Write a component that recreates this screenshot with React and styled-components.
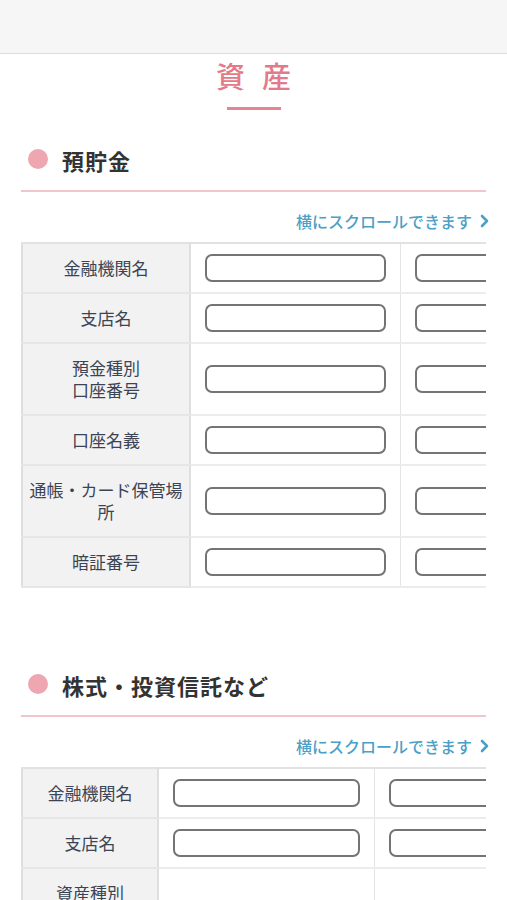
import React from "react";
import styled, { createGlobalStyle } from "styled-components";

const Global = createGlobalStyle`
  html, body { margin: 0; padding: 0; background: #fff; }
  body { font-family: "Noto Sans CJK JP", "Noto Sans", sans-serif; color: #333; }
  * { box-sizing: border-box; }
`;

const TopBar = styled.header`
  height: 54px;
  background: #f6f6f6;
  border-bottom: 1px solid #dcdcdc;
`;

const Main = styled.main`
  padding: 0 21px 40px;
`;

const PageTitle = styled.h1`
  margin: 3px 0 0;
  text-align: center;
  font-size: 29px;
  font-weight: 500;
  line-height: 36px;
  letter-spacing: 17px;
  padding-left: 17px;
  color: #e27a89;
  &::after {
    content: "";
    display: block;
    width: 54px;
    height: 3px;
    margin: 14px auto 0;
    background: #e48593;
    position: relative;
    left: -8px;
  }
`;

const Section = styled.section`
  margin-top: ${(p) => p.$top}px;
`;

const Heading = styled.h2`
  display: flex;
  align-items: center;
  gap: 14px;
  margin: 0;
  padding: 0 0 15px 7px;
  border-bottom: 2px solid #f1c5cc;
  font-size: 22px;
  font-weight: 700;
  line-height: 30px;
  color: #333;
  letter-spacing: 1px;
  &::before {
    content: "";
    width: 20px;
    height: 20px;
    border-radius: 50%;
    background: #eea6b0;
    flex: none;
    margin-top: -3px;
  }
`;

const ScrollHint = styled.p`
  margin: 17px -3px 9px 0;
  display: flex;
  justify-content: flex-end;
  align-items: center;
  gap: 8px;
  font-size: 16px;
  line-height: 24px;
  font-weight: 500;
  color: #4c9fc6;
`;

const TableScroller = styled.div`
  width: 100%;
  overflow: hidden;
`;

const Table = styled.table`
  border-collapse: collapse;
  table-layout: fixed;
  width: ${(p) => p.$width}px;
  border-top: 2px solid #e2e2e2;
  border-left: 2px solid #dedede;
`;

const LabelCell = styled.th`
  background: #f2f2f2;
  border-right: 2px solid #dedede;
  border-bottom: 2px solid #e6e6e6;
  padding: 13px 2px;
  font-size: 17px;
  font-weight: 400;
  line-height: 22px;
  color: #3b4454;
  text-align: center;
  white-space: pre-line;
`;

const InputCell = styled.td`
  border-right: 1px solid #e4e4e4;
  border-bottom: 2px solid #ececec;
  padding: 0 ${(p) => p.$pad}px;
  vertical-align: middle;
`;

const TextInput = styled.input`
  display: block;
  width: 100%;
  height: 28px;
  border: 2px solid #747474;
  border-radius: 7px;
  background: #fff;
  outline: none;
  padding: 0 6px;
  font: inherit;
`;

const Chevron = () => (
  <svg width="9" height="14" viewBox="0 0 9 14" aria-hidden="true">
    <polyline points="2,2 7,7 2,12" fill="none" stroke="#4c9fc6" strokeWidth="2.6" strokeLinecap="round" strokeLinejoin="round" />
  </svg>
);

const deposits = ["金融機関名", "支店名", "預金種別\n口座番号", "口座名義", "通帳・カード保管場\n所", "暗証番号"];
const stocks = [
  { label: "金融機関名", input: true },
  { label: "支店名", input: true },
  { label: "資産種別\n銘柄", input: false },
];

function AssetTable({ rows, cols, pad }) {
  const total = cols.reduce((a, b) => a + b, 0);
  return (
    <TableScroller>
      <Table $width={total}>
        <colgroup>
          {cols.map((w, i) => (
            <col key={i} style={{ width: w }} />
          ))}
        </colgroup>
        <tbody>
          {rows.map((r, i) => (
            <tr key={i}>
              <LabelCell scope="row">{r.label}</LabelCell>
              <InputCell $pad={pad}>{r.input && <TextInput type="text" />}</InputCell>
              <InputCell $pad={pad}>{r.input && <TextInput type="text" />}</InputCell>
            </tr>
          ))}
        </tbody>
      </Table>
    </TableScroller>
  );
}

export default function App() {
  return (
    <>
      <Global />
      <TopBar />
      <Main>
        <PageTitle>資産</PageTitle>
        <Section $top={35}>
          <Heading>預貯金</Heading>
          <ScrollHint>
            横にスクロールできます
            <Chevron />
          </ScrollHint>
          <AssetTable rows={deposits.map((label) => ({ label, input: true }))} cols={[168, 210, 210]} pad={14} />
        </Section>
        <Section $top={82}>
          <Heading>株式・投資信託など</Heading>
          <ScrollHint>
            横にスクロールできます
            <Chevron />
          </ScrollHint>
          <AssetTable rows={stocks} cols={[136, 216, 216]} pad={14} />
        </Section>
      </Main>
    </>
  );
}
